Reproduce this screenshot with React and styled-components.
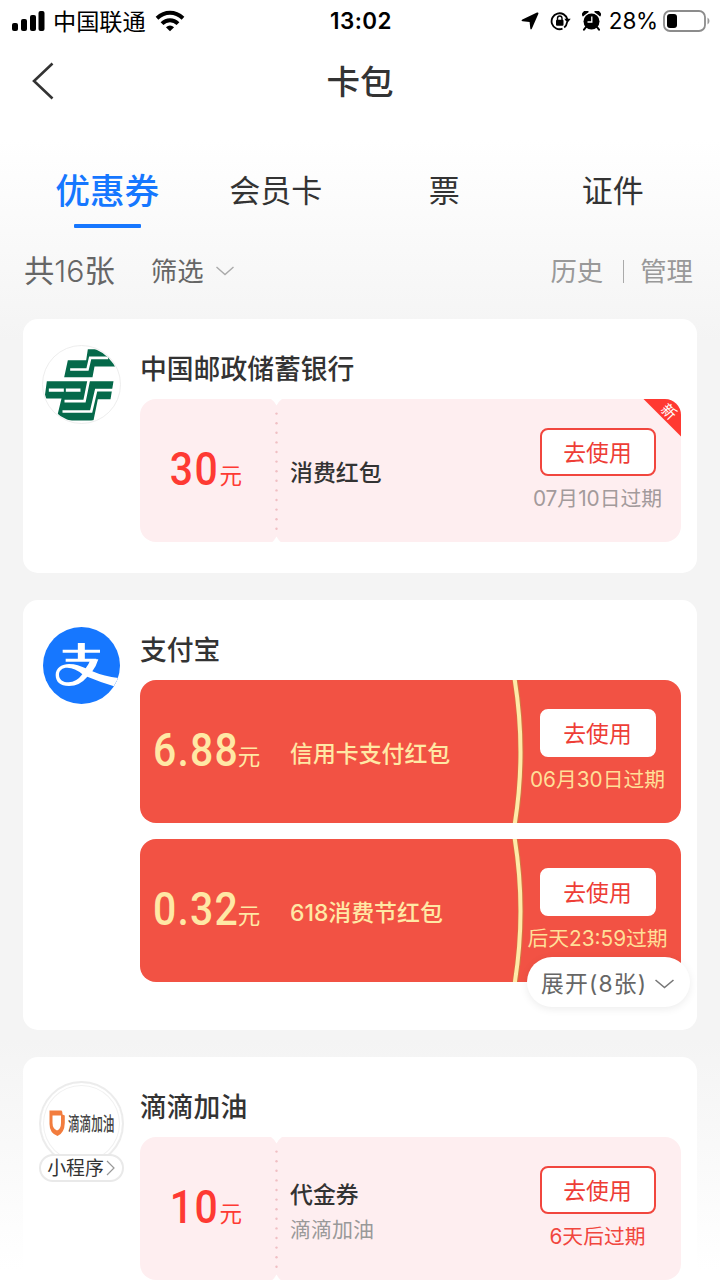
import React from 'react';
import styled, { createGlobalStyle, css } from 'styled-components';

const GlobalStyle = createGlobalStyle`
  * { box-sizing: border-box; }
  body {
    margin: 0;
    background: #fff;
    font-family: Inter, "Noto Sans CJK SC", sans-serif;
    color: #333;
  }
`;

const Page = styled.div`
  width: 720px;
  height: 1280px;
  overflow: hidden;
  display: flex;
  flex-direction: column;
  background: linear-gradient(#fff 0, #fff 140px, #f4f4f4 340px, #f4f4f4 1040px, #fff 1270px);
`;

const StatusBar = styled.header`
  height: 40px;
  flex: none;
  display: grid;
  grid-template-columns: 1fr auto 1fr;
  align-items: center;
  padding: 0 10px 1px 12px;
  color: #000;
`;

const StatusGroup = styled.div`
  display: flex;
  align-items: center;
  justify-content: ${(p) => (p.$end ? 'flex-end' : 'flex-start')};
`;

const StatusSpacer = styled.i`
  width: 11px;
`;

const Carrier = styled.span`
  font-size: 23.2px;
  line-height: 38px;
  padding-top: 3px;
  margin: 0 9px 0 8px;
`;

const Clock = styled.span`
  font: 600 22.4px/38px Inter, sans-serif;
  letter-spacing: 0.5px;
`;

const Percent = styled.span`
  font: 400 22.5px/38px Inter, sans-serif;
  letter-spacing: -0.2px;
  margin: 0 5px 0 8px;
`;

const NavBar = styled.nav`
  height: 82px;
  flex: none;
  display: grid;
  grid-template-columns: 60px 1fr 60px;
  align-items: center;
`;

const BackButton = styled.button`
  border: 0;
  background: none;
  padding: 0 0 0 32px;
  display: flex;
`;

const PageTitle = styled.h1`
  margin: 0;
  padding-top: 2px;
  text-align: center;
  font-size: 33.5px;
  font-weight: 500;
  line-height: 50px;
`;

const Tabs = styled.div`
  display: grid;
  grid-template-columns: repeat(4, 1fr);
  height: 107px;
  flex: none;
  padding: 43px 23px 0 23px;
`;

const Tab = styled.div`
  display: flex;
  flex-direction: column;
  align-items: center;
  font-size: ${(p) => (p.$active ? 34.7 : 31)}px;
  font-weight: ${(p) => (p.$active ? 500 : 400)};
  color: ${(p) => (p.$active ? '#1677ff' : '#333')};
  line-height: ${(p) => (p.$active ? 53 : 51)}px;
  ${(p) =>
    p.$active &&
    css`
      &::after {
        content: '';
        width: 67px;
        height: 4px;
        margin-top: 6px;
        border-radius: 1px;
        background: #1677ff;
      }
    `}
`;

const FilterBar = styled.div`
  display: flex;
  align-items: center;
  height: 84px;
  flex: none;
  margin-bottom: 6px;
  padding: 0 27px 0 24px;
  color: #666;
  line-height: 44px;
`;

const Total = styled.span`
  font-size: 30.300px;
  font-weight: 300;
  letter-spacing: 0;
  margin-right: 36px;

  b {
    font-weight: 400;
  }
`;

const FilterLink = styled.span`
  font-size: 26.4px;
  color: ${(p) => (p.$muted ? '#999' : '#666')};
`;

const ChevronSlot = styled.span`
  display: flex;
  margin-left: 12px;
`;

const Actions = styled.div`
  margin-left: auto;
  display: flex;
  align-items: center;
`;

const Separator = styled.i`
  width: 1px;
  height: 23px;
  margin: 0 16px 0 20px;
  background: #aaa;
`;

const CardList = styled.main`
  display: flex;
  flex-direction: column;
  gap: 27px;
  padding: 0 23px;
`;

const Card = styled.section`
  position: relative;
  flex: none;
  display: grid;
  grid-template-columns: 117px 541px;
  height: ${(p) => p.$height}px;
  border-radius: 15px;
  background: #fff;
`;

const LogoColumn = styled.div`
  display: flex;
  flex-direction: column;
  align-items: center;
  padding-top: ${(p) => p.$top}px;
`;

const CardBody = styled.div`
  display: flex;
  flex-direction: column;
`;

const Merchant = styled.h2`
  margin: 0;
  padding-top: 29.500px;
  height: 79.500px;
  flex: none;
  font-size: 26.8px;
  font-weight: 500;
  line-height: 40px;
`;

const CouponList = styled.div`
  display: flex;
  flex-direction: column;
  gap: 15.500px;
`;

const Coupon = styled.article`
  position: relative;
  overflow: hidden;
  display: grid;
  grid-template-columns: 137px 1fr 167px;
  height: 143.500px;
  border-radius: 16px;
  background: ${(p) => (p.$solid ? '#f25244' : '#feeef0')};
  color: ${(p) => (p.$solid ? '#ffe8a5' : '#333')};
`;

const Amount = styled.div`
  display: flex;
  align-items: baseline;
  justify-content: ${(p) => (p.$solid ? 'flex-start' : 'flex-end')};
  padding: ${(p) => (p.$solid ? '0 0 0 13px' : '0 35px 0 0')};
  font: 500 46.5px/141px Roboto, "Noto Sans CJK SC", sans-serif;
  color: ${(p) => (p.$solid ? 'inherit' : '#fe3a33')};
  white-space: nowrap;
`;

const Digits = styled.span`
  letter-spacing: ${(p) => (p.$solid ? 1.4 : 1.8)}px;
  transform: scaleX(0.88);
  transform-origin: ${(p) => (p.$solid ? 'left' : 'right')} center;
  margin-right: ${(p) => (p.$solid ? -13 : 0)}px;
`;

const Unit = styled.span`
  position: relative;
  top: -1px;
  font: 400 22.500px/1 "Noto Sans CJK SC", sans-serif;
`;

const Info = styled.div`
  display: flex;
  flex-direction: column;
  justify-content: center;
  padding: ${(p) => (p.$tall ? 8 : 5)}px 0 0 13px;
`;

const CouponName = styled.span`
  font-size: 22.900px;
  font-weight: 500;
  line-height: 34px;
`;

const CouponNote = styled.span`
  font-size: 21px;
  line-height: 35px;
  color: #999;
`;

const UseColumn = styled.div`
  display: flex;
  flex-direction: column;
  align-items: center;
  padding-top: 29px;
`;

const UseButton = styled.button`
  width: 116px;
  height: 48px;
  flex: none;
  padding: 1px 0 0;
  border: 2px solid ${(p) => (p.$solid ? '#fff' : '#f1463e')};
  border-radius: 8px;
  background: #fff;
  color: #ee3d36;
  font: 400 22.8px/42px "Noto Sans CJK SC", sans-serif;
`;

const Expiry = styled.span`
  margin-top: 7.500px;
  font-size: 20.8px;
  line-height: 32px;
  white-space: nowrap;
  color: ${(p) => p.$color};
`;

const Perforation = styled.svg`
  position: absolute;
  left: 127px;
  top: 0;
`;

const Ribbon = styled.svg`
  position: absolute;
  left: 370px;
  top: 0;
`;

const NewBadge = styled.div`
  position: absolute;
  top: 0;
  right: 0;
  width: 38px;
  height: 38px;
  background: #ff3932;
  clip-path: polygon(0 0, 100% 0, 100% 100%);
  color: #fff;

  span {
    position: absolute;
    left: 18px;
    top: 5px;
    font-size: 15px;
    line-height: 16px;
    transform: rotate(45deg);
  }
`;

const ExpandPill = styled.div`
  position: absolute;
  right: 7px;
  bottom: 23px;
  width: 163px;
  height: 50px;
  border-radius: 25px;
  background: #fff;
  box-shadow: 0 2px 8px rgba(0, 0, 0, 0.08);
  display: flex;
  align-items: center;
  justify-content: space-between;
  padding: 3px 16px 0 14px;
  font-size: 22.8px;
  line-height: 32px;
  letter-spacing: 1.2px;
  color: #666;
`;

const DidiCircle = styled.div`
  width: 85px;
  height: 85px;
  border: 2px solid #ececec;
  border-radius: 50%;
  display: flex;
  align-items: center;
  justify-content: center;
  gap: 3px;
  box-shadow: inset 0 0 0 2px #fff, inset 0 0 0 3px #f1f1f1;
`;

const DidiName = styled.span`
  width: 46px;
  padding-top: 4px;
  line-height: 24px;
  color: #444;
  white-space: nowrap;

  b {
    display: inline-block;
    font-weight: 500;
    font-size: 19px;
    transform: scaleX(0.61);
    transform-origin: 0 50%;
  }
`;

const MiniProgramTag = styled.div`
  position: relative;
  margin-top: -12px;
  width: 85px;
  height: 28px;
  border: 2px solid #e9e9e9;
  border-radius: 14px;
  background: #fff;
  display: flex;
  align-items: center;
  justify-content: center;
  gap: 2px;
  padding: 0 1px 0 0;
  font-size: 18.900px;
  line-height: 24px;

  span {
    padding-top: 3px;
  }
`;

function SignalIcon() {
  return (
    <svg width="33" height="22" viewBox="0 0 33 22">
      <rect x="0" y="13" width="6" height="8" rx="2" />
      <rect x="9" y="9" width="6" height="12" rx="2" />
      <rect x="18" y="5" width="6" height="16" rx="2" />
      <rect x="26.500" y="1" width="6" height="20" rx="2" />
    </svg>
  );
}

function WifiIcon() {
  return (
    <svg width="30" height="22" viewBox="0 0 30 22">
      <g fill="none" stroke="#000" strokeWidth="4">
        <path d="M2 8.200Q8 2.800 15 2.800T28 8.200" />
        <path d="M7 13.600Q10.500 10.200 15 10.200T23 13.600" />
      </g>
      <path d="M10.900 17.200Q15 14 19.100 17.200L15 21.200Z" />
    </svg>
  );
}

function LocationIcon() {
  return (
    <svg width="18" height="18" viewBox="0 0 18 18">
      <path d="M16 .5Q17.900 0 17.300 1.900L10.800 16.800Q9.800 18.400 9.300 16.500L8.600 9.900L1.700 9.200Q-.4 8.600 1.400 7.500Z" />
    </svg>
  );
}

function RotationLockIcon() {
  return (
    <svg width="21" height="20" viewBox="0 0 21 20">
      <path d="M12.500 17.700A8 8 0 1 1 17.400 8.500" fill="none" stroke="#000" strokeWidth="1.800" />
      <path d="M17.100 11.200A8 8 0 0 1 14.200 16.500" fill="none" stroke="#000" strokeWidth="1.800" />
      <path d="M14.300 7.800H20.700L17.400 12Z" />
      <rect x="6" y="8.800" width="7.500" height="6" rx="1" />
      <path d="M7.500 9V7.300a2.250 2.250 0 0 1 4.500 0V9" fill="none" stroke="#000" strokeWidth="1.400" />
    </svg>
  );
}

function AlarmIcon() {
  return (
    <svg width="19" height="20" viewBox="0 0 18 20">
      <circle cx="9" cy="10.500" r="8" />
      <path d="M.7 5.200A3.300 3.300 0 0 1 5.900 1.200M12.100 1.200A3.300 3.300 0 0 1 17.300 5.200" stroke="#000" strokeWidth="1.200" />
      <path d="M3.500 16 1.500 18.700M14.500 16l2 2.700" stroke="#000" strokeWidth="2" strokeLinecap="round" />
      <path d="M9.300 5.600V11H5" fill="none" stroke="#fff" strokeWidth="1.300" />
    </svg>
  );
}

function BatteryIcon() {
  return (
    <svg width="47" height="22" viewBox="0 0 47 22">
      <rect x="1" y="1" width="41" height="20" rx="6" fill="none" stroke="#8c8c8c" strokeWidth="1.800" />
      <rect x="4" y="4" width="10" height="14" rx="3" />
      <path d="M44.500 7.500Q46.500 8.500 46.500 11T44.500 14.500Z" fill="#999" />
    </svg>
  );
}

function Chevron({ width, height, color, stroke = 1.4 }) {
  return (
    <svg width={width} height={height} viewBox={`0 0 ${width} ${height}`} fill="none" stroke={color} strokeWidth={stroke}>
      <path d={`M.5 1L${width / 2} ${height - 1.5}L${width - 0.5} 1`} />
    </svg>
  );
}

function PostalBankLogo() {
  return (
    <svg width="79" height="79" viewBox="65.500 104.500 237 237">
      <defs>
        <clipPath id="postal-disc">
          <circle cx="184" cy="223" r="114" />
        </clipPath>
      </defs>
      <circle cx="184" cy="223" r="117" fill="#fff" stroke="#e9e9e9" strokeWidth="2.500" />
      <g clipPath="url(#postal-disc)">
        <path fill="#05694a" d="M203 117H262L287 169H223L217 201H132L143 150H198Z" />
        <path fill="none" stroke="#fff" strokeWidth="8" d="M150 178H202L210 143H264" />
        <path fill="#05694a" d="M80 213H280L271 267H233L220 331H108L124 265H73Z" />
        <g fill="none" stroke="#fff">
          <path strokeWidth="10" d="M86 240H131M137 240H181" />
          <path strokeWidth="8" d="M133 273H193L206 209" />
          <path strokeWidth="8" d="M127 304H213L228 240H284" />
        </g>
      </g>
    </svg>
  );
}

function AlipayLogo() {
  return (
    <svg width="77" height="77" viewBox="0 0 231 231">
      <defs>
        <clipPath id="alipay-disc">
          <circle cx="115.500" cy="115.500" r="115.500" />
        </clipPath>
      </defs>
      <circle cx="115.500" cy="115.500" r="115.500" fill="#1677ff" />
      <g clipPath="url(#alipay-disc)" fill="none" stroke="#fff">
        <path strokeWidth="9" d="M59 73H171M68 100H160" />
        <path strokeWidth="21" d="M115 48V101" />
        <path
          fill="#fff"
          stroke="none"
          d="M143 97H166Q160 117 148 133Q184 149 226 153L213 178Q169 164 133 149Q110 177 78 177C51 177 38 164 38 144C38 122 58 111 78 111C97 111 113 117 128 124Q137 113 143 97ZM118 142Q96 122 73 122C58 122 48 130 48 143C48 158 60 166 77 166Q100 166 118 142Z"
        />
      </g>
    </svg>
  );
}

function DidiMark() {
  return (
    <svg width="16" height="26" viewBox="0 0 16 26">
      <path fill="#f27c3d" d="M.5.500H12.500Q13.500 1 13.500 4.500L15.800 5.500V13Q15.500 23 8.500 26Q.5 23 .5 14Z" />
      <path fill="#fff" d="M3.500 5.500H12V13Q12 18.800 8 20.500Q3.500 18.500 3.500 13Z" />
    </svg>
  );
}

function TicketEdge() {
  return (
    <Perforation width="20" height="144" viewBox="0 0 20 144">
      <path fill="#fff" d="M4 0H15Q12 2 9.500 6.500Q7 2 4 0ZM4 144H15Q12 142 9.500 137.500Q7 142 4 144Z" />
      {Array.from({ length: 13 }, (_, i) => (
        <circle key={i} cx="9.500" cy={14.6 + i * 9.6} r="1.200" fill="#f0bfc3" />
      ))}
    </Perforation>
  );
}

function GoldRibbon() {
  return (
    <Ribbon width="16" height="144" viewBox="0 0 16 144">
      <path fill="none" stroke="#cf7a42" strokeWidth="5.600" d="M4.800 -1Q16.600 72 4.800 145" />
      <path fill="none" stroke="#ffe9a8" strokeWidth="4" d="M4.600 -1Q16.400 72 4.600 145" />
    </Ribbon>
  );
}

function CouponItem({ amount, name, note, expiry, solid, urgent, fresh }) {
  return (
    <Coupon $solid={solid}>
      {solid ? <GoldRibbon /> : <TicketEdge />}
      <Amount $solid={solid}>
        <Digits $solid={solid}>{amount}</Digits>
        <Unit>元</Unit>
      </Amount>
      <Info $tall={Boolean(note)}>
        <CouponName>{name}</CouponName>
        {note && <CouponNote>{note}</CouponNote>}
      </Info>
      <UseColumn>
        <UseButton $solid={solid}>去使用</UseButton>
        <Expiry $color={solid ? '#ffdf98' : urgent ? '#f1463e' : '#a39a9b'}>{expiry}</Expiry>
      </UseColumn>
      {fresh && (
        <NewBadge>
          <span>新</span>
        </NewBadge>
      )}
    </Coupon>
  );
}

export default function App() {
  return (
    <Page>
      <GlobalStyle />
      <StatusBar>
        <StatusGroup>
          <SignalIcon />
          <Carrier>中国联通</Carrier>
          <WifiIcon />
        </StatusGroup>
        <Clock>13:02</Clock>
        <StatusGroup $end>
          <LocationIcon />
          <StatusSpacer />
          <RotationLockIcon />
          <StatusSpacer />
          <AlarmIcon />
          <Percent>28%</Percent>
          <BatteryIcon />
        </StatusGroup>
      </StatusBar>
      <NavBar>
        <BackButton aria-label="返回">
          <svg width="22" height="38" viewBox="0 0 22 38" fill="none" stroke="#333" strokeWidth="2.600">
            <path d="M20.500 1.500L2 19L20.500 36.500" />
          </svg>
        </BackButton>
        <PageTitle>卡包</PageTitle>
      </NavBar>
      <Tabs>
        <Tab $active>优惠券</Tab>
        <Tab>会员卡</Tab>
        <Tab>票</Tab>
        <Tab>证件</Tab>
      </Tabs>
      <FilterBar>
        <Total>
          <b>共</b>16<b>张</b>
        </Total>
        <FilterLink>筛选</FilterLink>
        <ChevronSlot>
          <Chevron width={18} height={10} color="#aaa" />
        </ChevronSlot>
        <Actions>
          <FilterLink $muted>历史</FilterLink>
          <Separator />
          <FilterLink $muted>管理</FilterLink>
        </Actions>
      </FilterBar>
      <CardList>
        <Card $height={254}>
          <LogoColumn $top={26}>
            <PostalBankLogo />
          </LogoColumn>
          <CardBody>
            <Merchant>中国邮政储蓄银行</Merchant>
            <CouponItem amount="30" name="消费红包" expiry="07月10日过期" fresh />
          </CardBody>
        </Card>
        <Card $height={430}>
          <LogoColumn $top={27}>
            <AlipayLogo />
          </LogoColumn>
          <CardBody>
            <Merchant>支付宝</Merchant>
            <CouponList>
              <CouponItem solid amount="6.88" name="信用卡支付红包" expiry="06月30日过期" />
              <CouponItem solid amount="0.32" name="618消费节红包" expiry="后天23:59过期" />
            </CouponList>
          </CardBody>
          <ExpandPill>
            展开(8张)
            <Chevron width={19} height={10} color="#777" stroke={1.6} />
          </ExpandPill>
        </Card>
        <Card $height={254}>
          <LogoColumn $top={23.5}>
            <DidiCircle>
              <DidiMark />
              <DidiName>
                <b>滴滴加油</b>
              </DidiName>
            </DidiCircle>
            <MiniProgramTag>
              <span>小程序</span>
              <svg width="9" height="16" viewBox="0 0 9 16" fill="none" stroke="#999" strokeWidth="1.200">
                <path d="M1 1L8 8L1 15" />
              </svg>
            </MiniProgramTag>
          </LogoColumn>
          <CardBody>
            <Merchant>滴滴加油</Merchant>
            <CouponItem amount="10" name="代金券" note="滴滴加油" expiry="6天后过期" urgent />
          </CardBody>
        </Card>
      </CardList>
    </Page>
  );
}
